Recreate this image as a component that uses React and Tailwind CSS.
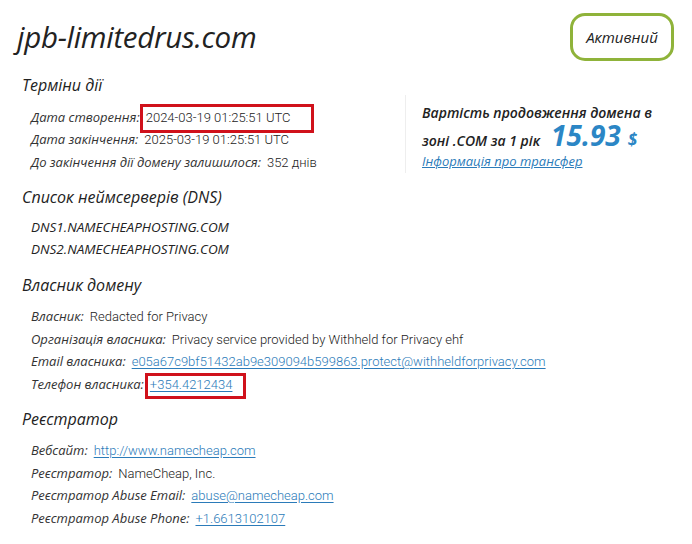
import React from "react";

const head = { fontFamily: '"Open Sans", "Noto Sans", sans-serif' };
const body = { fontFamily: 'Roboto, "Liberation Sans", sans-serif' };

// one "label: value" row
function Row({ label, children }) {
    return (
        <div className="flex items-center h-[22.5px] pl-[31px] text-[13px] text-[#222]">
            <span className="italic text-[#333]" style={head}>{label}:</span>
            <span className="ml-[6px] font-light text-[#222]" style={body}>{children}</span>
        </div>
    );
}

function Link({ children }) {
    return <a href="#" className="text-[#2b7bb9] underline underline-offset-2">{children}</a>;
}

// red annotation frame drawn over a value
function Marked({ w, h, dx, dy, children }) {
    return (
        <span className="relative">
            {children}
            <span
                className="absolute border-[3px] border-[#d0111b] pointer-events-none"
                style={{ width: w, height: h, left: dx, top: dy }}
            ></span>
        </span>
    );
}

function Section({ title, className = "", gap = "mt-[9px]", children }) {
    return (
        <div className={className}>
            <h2 className="text-[16px] italic font-medium text-[#222] pl-[22px] h-[24px] leading-[24px]" style={head}>{title}</h2>
            <div className={gap}>{children}</div>
        </div>
    );
}

export default function App() {
    return (
        <div className="w-[692px] h-[544px] bg-white overflow-hidden relative">
            {/* header */}
            <div className="flex justify-between items-start pt-[13px] pr-[18px]">
                <h1 className="pl-[17px] pt-[6px] text-[29.5px] italic font-medium text-[#222] leading-[36px] tracking-[-0.3px]" style={head}>
                    jpb-limitedrus.com
                </h1>
                <div className="w-[104px] h-[48px] rounded-[15px] border-[3px] border-[#8fb33a] flex items-center justify-center">
                    <span className="text-[15px] italic font-medium text-[#222]" style={head}>Активний</span>
                </div>
            </div>

            {/* dates + renewal price */}
            <div className="flex items-start mt-[12px]">
                <Section title="Терміни дії" className="w-[405px] shrink-0">
                    <Row label="Дата створення">
                        <Marked w={174} h={29} dx={-6} dy={-6}>2024-03-19 01:25:51 UTC</Marked>
                    </Row>
                    <Row label="Дата закінчення">2025-03-19 01:25:51 UTC</Row>
                    <Row label="До закінчення дії домену залишилося">352 днів</Row>
                </Section>
                <div className="mt-[22px] h-[78px] border-l border-[#eee] pl-[16px] pt-[7px]">
                    <p className="text-[14px] italic font-semibold text-[#222] leading-[22px]" style={head}>
                        Вартість продовження домена в
                    </p>
                    <p className="flex items-baseline h-[23px] text-[14px] italic font-semibold text-[#222] leading-[23px]" style={head}>
                        зоні .COM за 1 рік
                        <span className="ml-[11px] text-[28px] font-bold text-[#2b86c5] leading-[23px]">15.93</span>
                        <span className="ml-[7px] text-[17px] font-bold text-[#2b86c5] leading-[23px]">$</span>
                    </p>
                    <a href="#" className="block mt-[5px] text-[13px] italic font-medium text-[#2b7bb9] underline" style={head}>
                        Інформація про трансфер
                    </a>
                </div>
            </div>

            <Section title="Список неймсерверів (DNS)" className="mt-[11px]" gap="mt-[7px]">
                <div className="pl-[31px] text-[13.5px] italic text-[#222] leading-[22px]" style={head}>
                    <div>DNS1.NAMECHEAPHOSTING.COM</div>
                    <div>DNS2.NAMECHEAPHOSTING.COM</div>
                </div>
            </Section>

            <Section title="Власник домену" className="mt-[13px]">
                <Row label="Власник">Redacted for Privacy</Row>
                <Row label="Організація власника">Privacy service provided by Withheld for Privacy ehf</Row>
                <Row label="Email власника">
                    <Link>e05a67c9bf51432ab9e309094b599863.protect@withheldforprivacy.com</Link>
                </Row>
                <Row label="Телефон власника">
                    <Marked w={101} h={26} dx={-5} dy={-4}><Link>+354.4212434</Link></Marked>
                </Row>
            </Section>

            <Section title="Реєстратор" className="mt-[11px]">
                <Row label="Вебсайт"><Link>http://www.namecheap.com</Link></Row>
                <Row label="Реєстратор">NameCheap, Inc.</Row>
                <Row label="Реєстратор Abuse Email"><Link>abuse@namecheap.com</Link></Row>
                <Row label="Реєстратор Abuse Phone"><Link>+1.6613102107</Link></Row>
            </Section>
        </div>
    );
}
